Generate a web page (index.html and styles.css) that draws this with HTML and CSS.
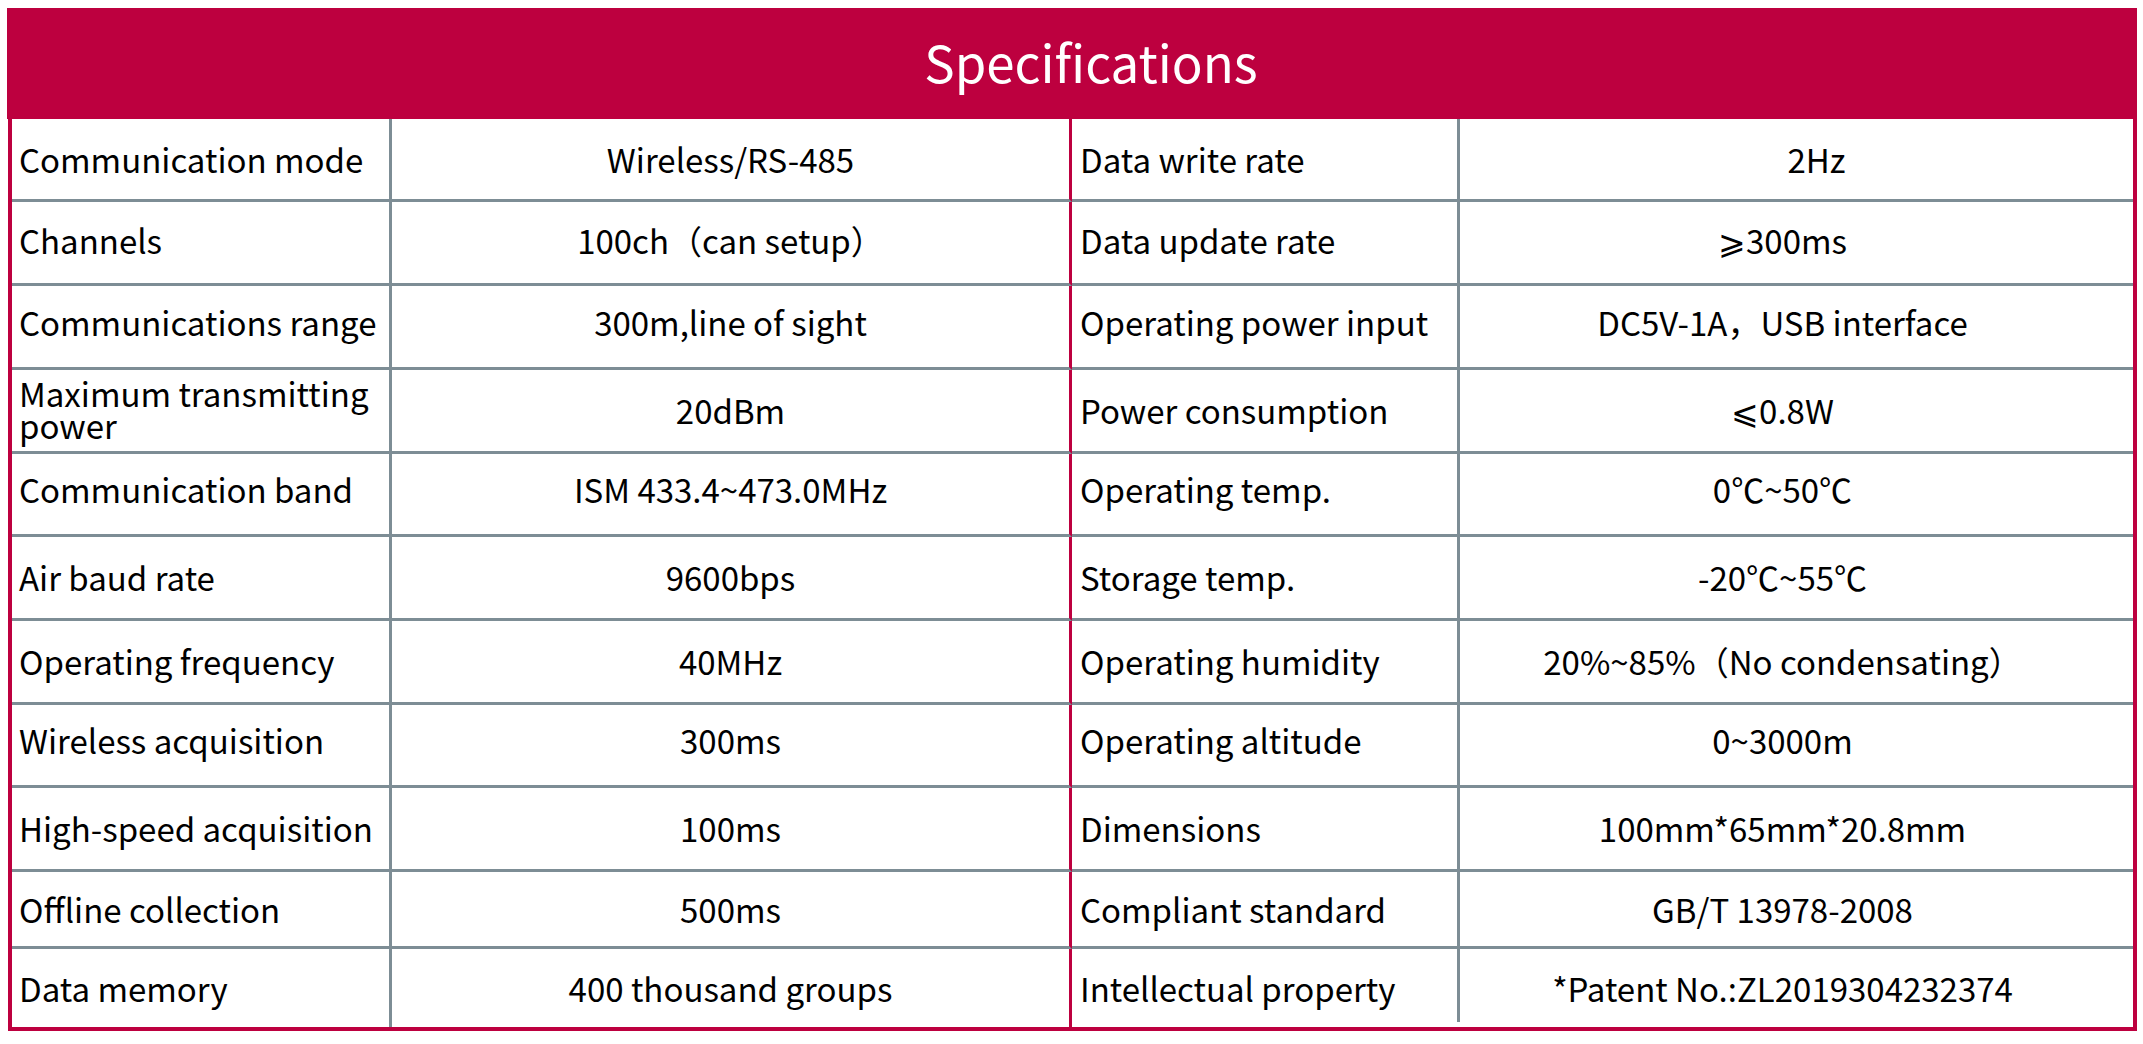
FILE: index.html
```html
<!DOCTYPE html>
<html lang="en">
<head>
<meta charset="utf-8">
<title>Specifications</title>
<link rel="stylesheet" href="styles.css">
</head>
<body>
<div class="spec">
  <div class="spec-head"><span class="spec-title">Specifications</span></div>
  <div class="spec-grid">
    <div class="row"><div class="c k">Communication mode</div><div class="c v">Wireless/RS-485</div><div class="c k2">Data write rate</div><div class="c v2 off">2Hz</div></div>
    <div class="row up-s"><div class="c k">Channels</div><div class="c v">100ch（can setup）</div><div class="c k2">Data update rate</div><div class="c v2">⩾300ms</div></div>
    <div class="row up-m"><div class="c k">Communications range</div><div class="c v">300m,line of sight</div><div class="c k2">Operating power input</div><div class="c v2">DC5V-1A，USB interface</div></div>
    <div class="row"><div class="c k two">Maximum transmitting power</div><div class="c v">20dBm</div><div class="c k2">Power consumption</div><div class="c v2">⩽0.8W</div></div>
    <div class="row up-l"><div class="c k">Communication band</div><div class="c v">ISM 433.4~473.0MHz</div><div class="c k2">Operating temp.</div><div class="c v2">0℃~50℃</div></div>
    <div class="row"><div class="c k">Air baud rate</div><div class="c v">9600bps</div><div class="c k2">Storage temp.</div><div class="c v2">-20℃~55℃</div></div>
    <div class="row"><div class="c k">Operating frequency</div><div class="c v">40MHz</div><div class="c k2">Operating humidity</div><div class="c v2">20%~85%（No condensating）</div></div>
    <div class="row up-l"><div class="c k">Wireless acquisition</div><div class="c v">300ms</div><div class="c k2">Operating altitude</div><div class="c v2">0~3000m</div></div>
    <div class="row"><div class="c k">High-speed acquisition</div><div class="c v">100ms</div><div class="c k2">Dimensions</div><div class="c v2">100mm*65mm*20.8mm</div></div>
    <div class="row"><div class="c k">Offline collection</div><div class="c v">500ms</div><div class="c k2">Compliant standard</div><div class="c v2">GB/T 13978-2008</div></div>
    <div class="row last"><div class="c k">Data memory</div><div class="c v">400 thousand groups</div><div class="c k2">Intellectual property</div><div class="c v2">*Patent No.:ZL2019304232374</div></div>
  </div>
</div>
</body>
</html>
```
FILE: styles.css
```css
html, body {
  margin: 0;
  padding: 0;
  background: #ffffff;
}

body {
  font-family: "Noto Sans CJK SC", "Noto Sans", sans-serif;
  color: #000000;
}

.spec {
  margin: 8px 0 0 7px;
  width: 2130px;
}

.spec-head {
  height: 111px;
  background: #bd003f;
  display: flex;
  align-items: center;
  justify-content: center;
  padding-left: 38px;
  box-sizing: border-box;
}

.spec-title {
  color: #ffffff;
  font-size: 51px;
  font-weight: 400;
  line-height: 1;
  padding-bottom: 4px;
}

.spec-grid {
  margin-left: 1px;
  display: grid;
  grid-template-columns: 380px 680px 388px 673px;
  grid-template-rows: 83px 84px 84px 84px 83px 84px 84px 83px 84px 77px 78px;
  border-left: 4px solid #bd003f;
  border-right: 4px solid #bd003f;
  border-bottom: 4px solid #bd003f;
}

.row {
  display: contents;
}

.c {
  box-sizing: border-box;
  display: flex;
  align-items: center;
  font-size: 33px;
  line-height: 1;
  border-bottom: 3px solid #7d8d95;
  border-right: 3px solid #7d8d95;
  white-space: nowrap;
}

.row.last .c {
  border-bottom: none;
}

.row.up-s .c {
  padding-bottom: 5px;
}

.row.up-m .c {
  padding-bottom: 8px;
}

.row.up-l .c {
  padding-bottom: 10px;
}

.k {
  padding-left: 7px;
}

.k.two {
  white-space: normal;
  line-height: 0.97;
  padding-bottom: 4px;
}

.v {
  justify-content: center;
  border-right-color: #bd003f;
}

.k2 {
  padding-left: 8px;
}

.v2 {
  justify-content: center;
  border-right: none;
  padding-right: 28px;
}

.v2.off {
  padding-right: 0;
  padding-left: 40px;
}

.row.last .v2,
.row.last .k2 {
  border-bottom: none;
}

.row.last .k2 {
  border-right-width: 3px;
  border-image: linear-gradient(to bottom, #7d8d95 92%, #ffffff 92%) 1;
  border-image-width: 0 3px 0 0;
}
```
